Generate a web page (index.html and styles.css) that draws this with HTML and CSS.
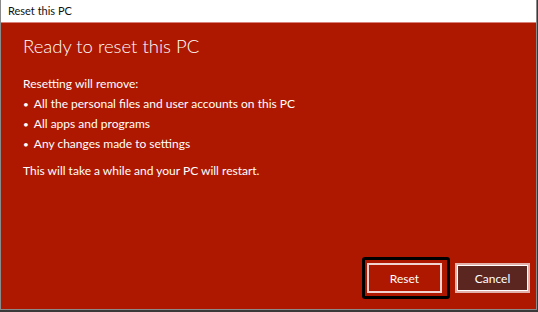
FILE: index.html
```html
<!DOCTYPE html>
<html lang="en">
<head>
  <meta charset="UTF-8">
  <title>Reset this PC</title>
  <link rel="stylesheet" href="styles.css">
</head>
<body>
  <div class="window">
    <div class="titlebar">Reset this PC</div>
    <div class="content">
      <h1>Ready to reset this PC</h1>
      <p class="lead">Resetting will remove:</p>
      <ul class="items">
        <li>All the personal files and user accounts on this PC</li>
        <li>All apps and programs</li>
        <li>Any changes made to settings</li>
      </ul>
      <p class="note">This will take a while and your PC will restart.</p>

      <div class="button-group">
        <div class="focus-ring">
          <button class="btn btn-reset">Reset</button>
        </div>
        <button class="btn btn-cancel">Cancel</button>
      </div>
    </div>
  </div>
</body>
</html>
```

FILE: styles.css
```css
html, body {
  margin: 0;
  padding: 0;
  background-color: #3a3a3a;
}
body {
  font-family: Lato, "Noto Sans", sans-serif;
  width: 538px;
  height: 312px;
  overflow: hidden;
}
.window {
  width: 535px;
  height: 309px;
  border: 1px solid #8a8a8a;
  border-top: none;
  background-color: #ae1800;
  display: flex;
  flex-direction: column;
}
.titlebar {
  height: 22px;
  background-color: #fff;
  border-bottom: 1px solid #d9827a;
  color: #111;
  font-size: 11px;
  line-height: 22px;
  padding-left: 7px;
}
.content {
  flex: 1;
  display: flex;
  flex-direction: column;
  padding: 0 0 0 22px;
  color: #fff;
}
h1 {
  margin: 9px 0 0;
  font-size: 18.5px;
  font-weight: 300;
  line-height: 28px;
}
.lead {
  margin: 14px 0 0;
  font-size: 12px;
  line-height: 20px;
}
.items {
  list-style: none;
  margin: 0;
  padding: 0;
  font-size: 12px;
  line-height: 20px;
}
.items li::before {
  content: "\2022";
  font-size: 10px;
  margin-right: 5px;
}
.note {
  margin: 7px 0 0;
  font-size: 12px;
  line-height: 20px;
}
.button-group {
  margin-top: auto;
  margin-bottom: 10px;
  margin-right: 6px;
  display: flex;
  justify-content: flex-end;
  align-items: center;
  gap: 5px;
}
.focus-ring {
  border: 3px solid #000;
  border-radius: 3px;
  padding: 3px 5px 3px 2px;
  display: flex;
}
.btn {
  width: 75px;
  height: 30px;
  font-family: Lato, "Noto Sans", sans-serif;
  font-size: 12px;
  color: #fff;
  cursor: pointer;
  padding: 0;
}
.btn-reset {
  background-color: #ae1800;
  border: 2px solid #f2d2ce;
}
.btn-cancel {
  background-color: #5b2520;
  border: 2px solid #e3b0aa;
  box-shadow: inset 0 0 0 1px #fff;
}
```
